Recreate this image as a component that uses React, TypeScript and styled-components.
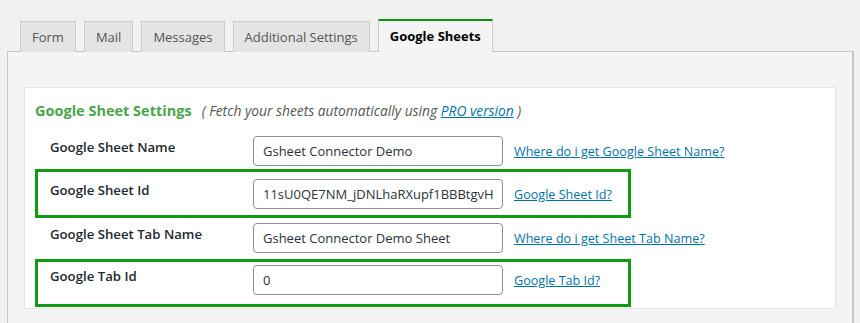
import styled, { createGlobalStyle } from 'styled-components'

const GlobalStyle = createGlobalStyle`
  html, body {
    margin: 0;
    padding: 0;
    background: #f1f1f1;
    font-family: "Open Sans", "Liberation Sans", sans-serif;
    font-size: 13px;
    color: #32373c;
  }
`

const tabs = ['Form', 'Mail', 'Messages', 'Additional Settings', 'Google Sheets']

const fields = [
  { label: 'Google Sheet Name', value: 'Gsheet Connector Demo', help: 'Where do i get Google Sheet Name?', boxed: false, pt: 12, pb: 0 },
  { label: 'Google Sheet Id', value: '11sU0QE7NM_jDNLhaRXupf1BBBtgvHxyz', help: 'Google Sheet Id?', boxed: true, pt: 7, pb: 6 },
  { label: 'Google Sheet Tab Name', value: 'Gsheet Connector Demo Sheet', help: 'Where do i get Sheet Tab Name?', boxed: false, pt: 2, pb: 3 },
  { label: 'Google Tab Id', value: '0', help: 'Google Tab Id?', boxed: true, pt: 3, pb: 9 },
]

export default function App() {
  return (
    <Page>
      <GlobalStyle />
      <TabBar>
        {tabs.map(tab => (
          <Tab key={tab} $active={tab === 'Google Sheets'}>{tab}</Tab>
        ))}
      </TabBar>

      <Panel>
        <SettingsBox>
          <Heading>
            <HeadingTitle>Google Sheet Settings</HeadingTitle>
            <HeadingNote>
              ( Fetch your sheets automatically using <a href="#">PRO version</a> )
            </HeadingNote>
          </Heading>

          {fields.map(field => (
            <Row key={field.label} $boxed={field.boxed} $pt={field.pt} $pb={field.pb}>
              <Label>{field.label}</Label>
              <Input type="text" defaultValue={field.value} />
              <HelpLink href="#">{field.help}</HelpLink>
            </Row>
          ))}
        </SettingsBox>

        <NextBox />
      </Panel>
    </Page>
  )
}

const Page = styled.div`
  padding: 19px 6px 0 7px;
  height: 323px;
  box-sizing: border-box;
  overflow: hidden;
`

const TabBar = styled.div`
  display: flex;
  align-items: flex-end;
  gap: 8px;
  padding-left: 13px;
  position: relative;
  z-index: 1;
  margin-bottom: -1px;
`

const Tab = styled.div<{ $active?: boolean }>`
  height: ${p => (p.$active ? '31px' : '30px')};
  line-height: 30px;
  padding: 0 11px;
  border: 1px solid #cccccc;
  border-bottom: none;
  border-top: ${p => (p.$active ? '2px solid #12900f' : '1px solid #cccccc')};
  background: ${p => (p.$active ? '#f4f4f4' : '#e4e4e4')};
  color: ${p => (p.$active ? '#000' : '#555')};
  font-weight: ${p => (p.$active ? 700 : 400)};
  font-size: 13px;
  white-space: nowrap;
`

const Panel = styled.div`
  border: 1px solid #c8c8c8;
  border-right-width: 2px;
  background: #f4f4f4;
  padding: 35px 16px 0 16px;
  min-height: 300px;
`

const SettingsBox = styled.div`
  background: #fff;
  border: 1px solid #e5e5e5;
  padding: 0 10px 1px 10px;
`

const NextBox = styled.div`
  background: #fff;
  border: 1px solid #e5e5e5;
  margin-top: 14px;
  height: 60px;
`

const Heading = styled.div`
  padding-top: 13px;
  line-height: 20px;
  display: flex;
  align-items: baseline;
`

const HeadingTitle = styled.span`
  color: #4aa54a;
  font-weight: 700;
  font-size: 14.5px;
`

const HeadingNote = styled.span`
  margin-left: 10px;
  font-style: italic;
  color: #555;
  font-size: 13.8px;

  a {
    color: #0073aa;
    text-decoration: underline;
  }
`

const Row = styled.div<{ $boxed?: boolean; $pt: number; $pb: number }>`
  display: flex;
  align-items: center;
  width: 596px;
  box-sizing: border-box;
  border: 3px solid ${p => (p.$boxed ? '#139a13' : 'transparent')};
  padding-top: ${p => p.$pt}px;
  padding-bottom: ${p => p.$pb}px;
`

const Label = styled.div`
  width: 215px;
  flex: none;
  box-sizing: border-box;
  padding-left: 12px;
  padding-bottom: 8px;
  font-weight: 600;
  color: #23282d;
  font-size: 13.2px;
`

const Input = styled.input`
  width: 250px;
  height: 30px;
  flex: none;
  box-sizing: border-box;
  border: 1px solid #8c8f94;
  border-radius: 4px;
  padding: 0 9px;
  font-family: "Open Sans", "Liberation Sans", sans-serif;
  font-size: 13px;
  color: #2c3338;
  background: #fff;
  outline: none;
`

const HelpLink = styled.a`
  margin-left: 11px;
  color: #0073aa;
  text-decoration: underline;
  font-size: 12.6px;
  white-space: nowrap;
`
